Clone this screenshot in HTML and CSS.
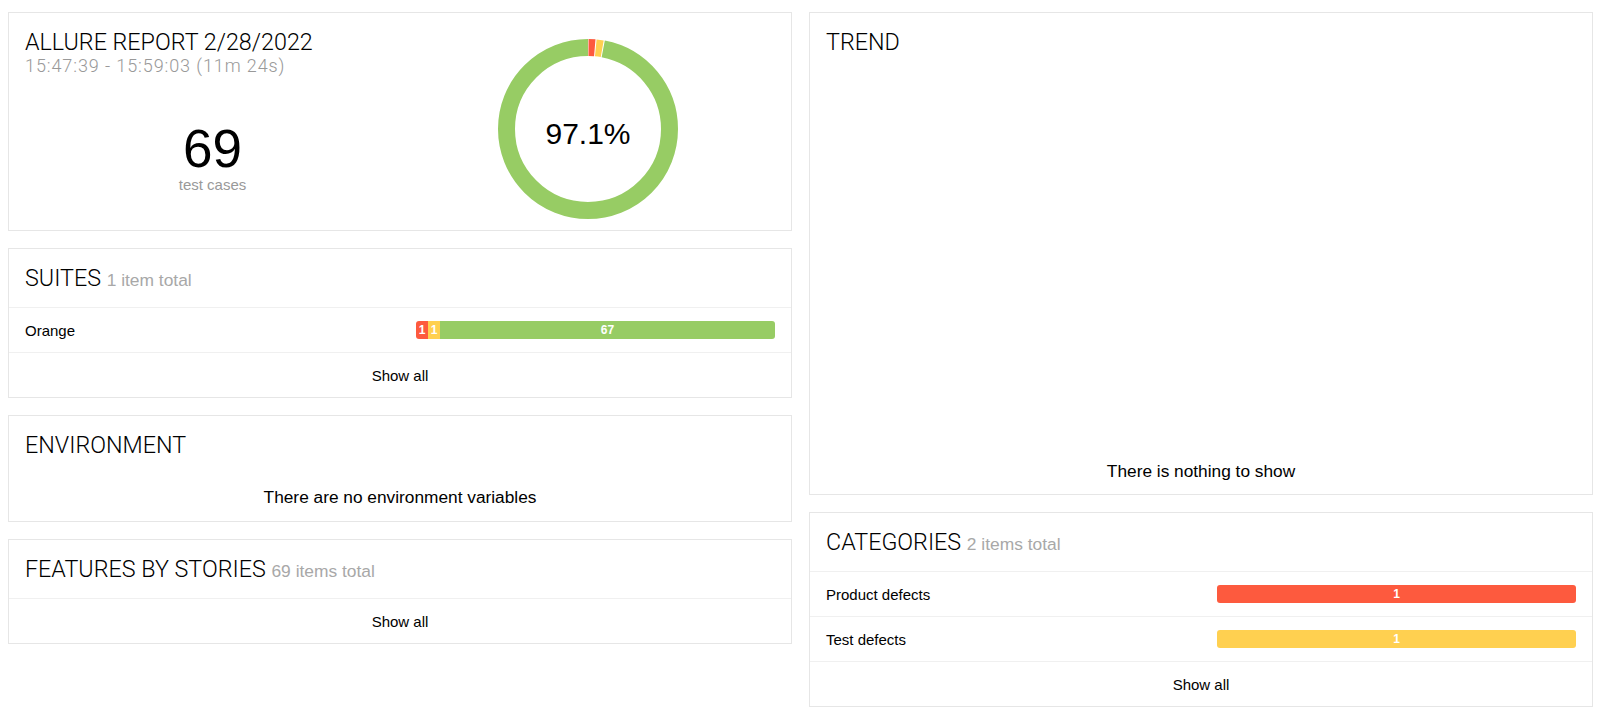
FILE: index.html
```html
<!DOCTYPE html>
<html>
<head>
	<title>Overview - Allure Report</title>
	<link rel="stylesheet" href="styles.css">
</head>
<body>
	<div class="dashboard">
		<div class="column">
			<!-- Summary: totals and success rate -->
			<div class="widget summary">
				<div class="summary-info">
					<h2 class="widget-title">ALLURE REPORT 2/28/2022</h2>
					<div class="summary-time">15:47:39 - 15:59:03 (11m 24s)</div>
					<div class="summary-count">
						<div class="count-number">69</div>
						<div class="count-label">test cases</div>
					</div>
				</div>
				<div class="summary-chart">
					<svg class="donut" width="200" height="200" viewBox="0 0 200 200">
						<g transform="rotate(-90 100 100)">
							<circle class="arc arc-failed" cx="100" cy="100" r="81.5" stroke-dasharray="6.4 505.7" stroke-dashoffset="-0.5"></circle>
							<circle class="arc arc-broken" cx="100" cy="100" r="81.5" stroke-dasharray="6.4 505.7" stroke-dashoffset="-7.9"></circle>
							<circle class="arc arc-passed" cx="100" cy="100" r="81.5" stroke-dasharray="496.3 15.8" stroke-dashoffset="-15.3"></circle>
						</g>
						<text class="donut-label" x="100" y="115" text-anchor="middle">97.1%</text>
					</svg>
				</div>
			</div>

			<div class="widget">
				<div class="widget-head">
					<h2 class="widget-title">SUITES <span class="widget-total">1 item total</span></h2>
				</div>
				<div class="widget-row">
					<div class="row-name">Orange</div>
					<div class="row-bar">
						<div class="bar">
							<div class="bar-fill failed" style="width: 3.4%">1</div>
							<div class="bar-fill broken" style="width: 3.3%">1</div>
							<div class="bar-fill passed" style="width: 93.3%">67</div>
						</div>
					</div>
				</div>
				<a class="show-all" href="#suites">Show all</a>
			</div>

			<div class="widget">
				<div class="widget-head plain">
					<h2 class="widget-title">ENVIRONMENT</h2>
				</div>
				<div class="widget-empty env-empty">There are no environment variables</div>
			</div>

			<div class="widget">
				<div class="widget-head">
					<h2 class="widget-title">FEATURES BY STORIES <span class="widget-total">69 items total</span></h2>
				</div>
				<a class="show-all" href="#behaviors">Show all</a>
			</div>
		</div>

		<div class="column">
			<div class="widget">
				<div class="widget-head plain">
					<h2 class="widget-title">TREND</h2>
				</div>
				<div class="trend-body">
					<div class="widget-empty">There is nothing to show</div>
				</div>
			</div>

			<div class="widget">
				<div class="widget-head">
					<h2 class="widget-title">CATEGORIES <span class="widget-total">2 items total</span></h2>
				</div>
				<div class="widget-row">
					<div class="row-name">Product defects</div>
					<div class="row-bar">
						<div class="bar">
							<div class="bar-fill failed" style="width: 100%">1</div>
						</div>
					</div>
				</div>
				<div class="widget-row">
					<div class="row-name">Test defects</div>
					<div class="row-bar">
						<div class="bar">
							<div class="bar-fill broken" style="width: 100%">1</div>
						</div>
					</div>
				</div>
				<a class="show-all" href="#categories">Show all</a>
			</div>
		</div>
	</div>
</body>
</html>
```

FILE: styles.css
```css
* {
	margin: 0;
	padding: 0;
	box-sizing: border-box;
}
body {
	font-family: 'Liberation Sans', Arial, sans-serif;
	font-size: 15px;
	color: #000;
	background-color: #fff;
}
.dashboard {
	display: grid;
	grid-template-columns: 1fr 1fr;
	column-gap: 17px;
	padding: 12px 7px 0 8px;
}
.column {
	display: flex;
	flex-direction: column;
	gap: 17px;
}

/* Widgets */
.widget {
	background-color: #fff;
	border: 1px solid #e6e6e6;
}
.widget-head {
	height: 59px;
	padding: 16px;
	border-bottom: 1px solid #f0f0f0;
}
.widget-head.plain {
	height: 58px;
	border-bottom: none;
}
.widget-title {
	font-family: Roboto, 'Liberation Sans', sans-serif;
	font-weight: 300;
	font-size: 23.3px;
	line-height: 26px;
	color: #000;
}
.widget-total {
	font-family: 'Liberation Sans', Arial, sans-serif;
	font-size: 17.4px;
	line-height: 1;
	color: #a8a8a8;
}
.widget-row {
	display: grid;
	grid-template-columns: 1fr 1fr;
	align-items: center;
	height: 45px;
	padding: 0 16px;
	border-bottom: 1px solid #f0f0f0;
}
.row-bar {
	padding-left: 16px;
}
.show-all {
	display: flex;
	justify-content: center;
	align-items: center;
	height: 44px;
	color: #000;
	text-decoration: none;
}
.widget-empty {
	font-size: 17.3px;
	line-height: 20px;
	text-align: center;
}
.env-empty {
	padding: 13px 16px 14px;
}
.trend-body {
	display: flex;
	justify-content: center;
	align-items: flex-end;
	height: 423px;
	padding-bottom: 13px;
}

/* Status bars */
.bar {
	display: flex;
	height: 18px;
	border-radius: 3px;
	overflow: hidden;
}
.bar-fill {
	color: #fff;
	font-size: 12px;
	font-weight: bold;
	line-height: 18px;
	text-align: center;
	white-space: nowrap;
}
.failed {
	background-color: #fd5a3e;
}
.broken {
	background-color: #ffd050;
}
.passed {
	background-color: #97cc64;
}

/* Summary */
.summary {
	display: grid;
	grid-template-columns: 1fr 1fr;
	padding: 16px 16px 1px;
}
.summary-time {
	font-family: Roboto, 'Liberation Sans', sans-serif;
	font-weight: 300;
	font-size: 18px;
	letter-spacing: 0.9px;
	line-height: 22px;
	color: #999;
}
.summary-count {
	margin-top: 45px;
	text-align: center;
}
.count-number {
	font-size: 53px;
	line-height: 54px;
}
.count-label {
	font-size: 15px;
	line-height: 18px;
	color: #999;
}
.summary-chart {
	display: flex;
	justify-content: center;
}
.donut {
	display: block;
}
.arc {
	fill: none;
	stroke-width: 17;
}
.arc-failed {
	stroke: #fd5a3e;
}
.arc-broken {
	stroke: #ffd050;
}
.arc-passed {
	stroke: #97cc64;
}
.donut-label {
	font-family: 'Liberation Sans', Arial, sans-serif;
	font-size: 30px;
	fill: #000;
}
```
